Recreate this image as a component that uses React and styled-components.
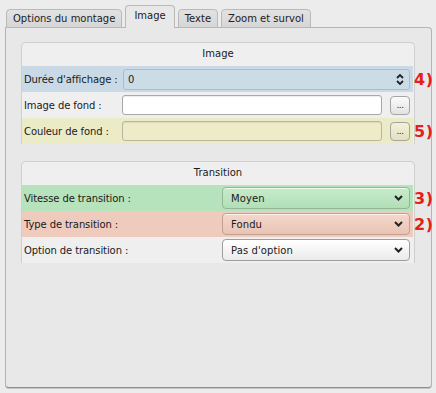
import React from 'react'
import styled, { createGlobalStyle } from 'styled-components'

const GlobalStyle = createGlobalStyle`
  html, body {
    margin: 0;
    padding: 0;
    background: #ececec;
  }
  body {
    font-family: "DejaVu Sans", "Liberation Sans", sans-serif;
    font-size: 10px;
    color: #1a1a1a;
  }
`

const Window = styled.div`
  width: 436px;
  height: 393px;
  padding: 5px 0 0 5px;
  box-sizing: border-box;
`

const TabBar = styled.div`
  display: flex;
  align-items: flex-end;
  gap: 3px;
  height: 23px;
  padding-left: 1px;
  margin-bottom: -1px;
  position: relative;
  z-index: 1;
`

const Tab = styled.div`
  box-sizing: border-box;
  height: ${p => (p.$active ? '23px' : '19px')};
  padding: 0 ${p => (p.$active ? '8px' : '6px')};
  display: flex;
  align-items: center;
  padding-bottom: ${p => (p.$active ? '3px' : '0')};
  border: 1px solid #b9b9b9;
  border-bottom: ${p => (p.$active ? 'none' : '1px solid #b9b9b9')};
  border-radius: 4px 4px 0 0;
  background: ${p => (p.$active ? '#e8e8e8' : 'linear-gradient(#e2e2e2, #d6d6d6)')};
  color: #222;
  white-space: nowrap;
`

const Panel = styled.div`
  box-sizing: border-box;
  width: 427px;
  height: 361px;
  border: 1px solid #b4b4b4;
  border-bottom-color: #8f8f8f;
  border-radius: 0 4px 4px 4px;
  background: #e8e8e8;
  padding: 14px 0 0 15px;
  box-shadow: 0 1px 0 #c4c4c4;
`

const Group = styled.div`
  box-sizing: border-box;
  width: 394px;
  border: 1px solid #cfcfcf;
  border-bottom: none;
  border-radius: 5px 5px 0 0;
  background: #efefef;
  margin-bottom: ${p => p.$gap || 0}px;
`

const GroupTitle = styled.div`
  height: 21px;
  line-height: 21px;
  text-align: center;
  margin-bottom: 2px;
`

const Row = styled.div`
  position: relative;
  height: 26px;
  margin-right: 1px;
  display: grid;
  grid-template-columns: ${p => p.$labelWidth}px 1fr;
  align-items: center;
  padding-right: 3px;
  background: ${p => p.$bg || 'transparent'};
`

const Label = styled.div`
  padding-left: 2px;
  white-space: nowrap;
  letter-spacing: -0.1px;
`

const Mark = styled.span`
  position: absolute;
  left: calc(100% + 1px);
  top: 50%;
  transform: translateY(-50%);
  color: #e52018;
  font-family: "DejaVu Sans", sans-serif;
  font-weight: bold;
  font-size: 16px;
  letter-spacing: 0.5px;
`

const SpinBox = styled.div`
  box-sizing: border-box;
  height: 21px;
  border: 1px solid #aebcc6;
  border-radius: 3px;
  background: #cbdce7;
  display: flex;
  align-items: center;
  justify-content: space-between;
  padding: 0 5px 0 4px;
`

const FileLine = styled.div`
  display: flex;
  align-items: center;
  gap: 8px;
`

const Input = styled.div`
  box-sizing: border-box;
  flex: 1;
  height: 20px;
  border: 1px solid ${p => p.$border || '#a9a9a9'};
  border-radius: 3px;
  background: ${p => p.$bg || '#ffffff'};
  box-shadow: inset 0 1px 1px rgba(0, 0, 0, 0.08);
`

const DotsButton = styled.div`
  box-sizing: border-box;
  width: 20px;
  height: 19px;
  border: 1px solid #a4a4a4;
  border-radius: 4px;
  background: ${p => p.$bg || 'linear-gradient(#fbfbfb, #e2e2e2)'};
  display: flex;
  align-items: flex-end;
  justify-content: center;
  padding-bottom: 4px;
  font-size: 9px;
  line-height: 1;
  letter-spacing: -0.5px;
`

const Combo = styled.div`
  box-sizing: border-box;
  height: 22px;
  border: 1px solid ${p => p.$border || '#9e9e9e'};
  border-radius: 4px;
  background: ${p => p.$bg || 'linear-gradient(#ffffff, #ebebeb)'};
  box-shadow: inset 0 1px 0 rgba(255, 255, 255, 0.7);
  display: flex;
  align-items: center;
  justify-content: space-between;
  padding: 0 6px 0 8px;
  letter-spacing: 0.1px;
`

const Chevron = () => (
  <svg width="9" height="6" viewBox="0 0 9 6">
    <path d="M1 1 L4.5 4.5 L8 1" fill="none" stroke="#222" strokeWidth="2" />
  </svg>
)

const UpDown = () => (
  <svg width="8" height="13" viewBox="0 0 8 13">
    <path d="M1 5 L4 2 L7 5" fill="none" stroke="#222" strokeWidth="1.8" />
    <path d="M1 8 L4 11 L7 8" fill="none" stroke="#222" strokeWidth="1.8" />
  </svg>
)

export default function App() {
  return (
    <Window>
      <GlobalStyle />
      <TabBar>
        <Tab>Options du montage</Tab>
        <Tab $active>Image</Tab>
        <Tab>Texte</Tab>
        <Tab>Zoom et survol</Tab>
      </TabBar>
      <Panel>
        <Group $gap={17}>
          <GroupTitle>Image</GroupTitle>
          <Row $labelWidth={101} $bg="#c9dae6">
            <Label>Durée d'affichage :</Label>
            <SpinBox>
              <span>0</span>
              <UpDown />
            </SpinBox>
            <Mark>4)</Mark>
          </Row>
          <Row $labelWidth={100}>
            <Label>Image de fond :</Label>
            <FileLine>
              <Input />
              <DotsButton>...</DotsButton>
            </FileLine>
          </Row>
          <Row $labelWidth={100} $bg="#ecebc7">
            <Label>Couleur de fond :</Label>
            <FileLine>
              <Input $bg="#eeebc8" $border="#b9b6a0" />
              <DotsButton $bg="linear-gradient(#f3f1d8, #e3e0c0)">...</DotsButton>
            </FileLine>
            <Mark>5)</Mark>
          </Row>
        </Group>
        <Group>
          <GroupTitle>Transition</GroupTitle>
          <Row $labelWidth={200} $bg="#b6e3bb">
            <Label>Vitesse de transition :</Label>
            <Combo $bg="linear-gradient(#c6ecca, #b2dfb7)" $border="#93b597">
              <span>Moyen</span>
              <Chevron />
            </Combo>
            <Mark>3)</Mark>
          </Row>
          <Row $labelWidth={200} $bg="#eecbbd">
            <Label>Type de transition :</Label>
            <Combo $bg="linear-gradient(#f4d7cb, #e9c4b5)" $border="#bfa194">
              <span>Fondu</span>
              <Chevron />
            </Combo>
            <Mark>2)</Mark>
          </Row>
          <Row $labelWidth={200}>
            <Label>Option de transition :</Label>
            <Combo>
              <span>Pas d'option</span>
              <Chevron />
            </Combo>
          </Row>
        </Group>
      </Panel>
    </Window>
  )
}
